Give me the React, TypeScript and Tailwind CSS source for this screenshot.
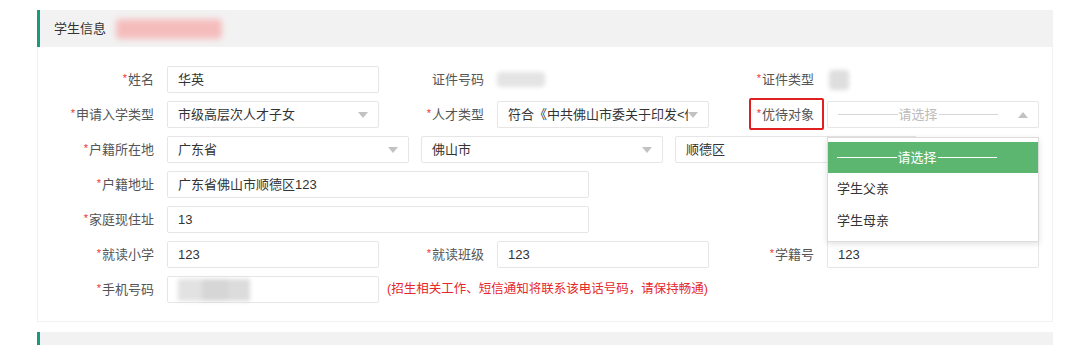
import React from "react";

const font = { fontFamily: '"Liberation Sans", "Noto Sans CJK SC", sans-serif' };

function Label({ text, star = true, children }: { text: string; star?: boolean; children?: React.ReactNode }) {
  return (
    <div className="w-[110px] shrink-0 pr-[5px] mr-[8px] text-right text-[13px] text-[#555]">
      <span className="relative inline-block">
        {star && <span className="text-[#e33] text-[11px] mr-[1px] align-top">*</span>}
        {text}
        {children}
      </span>
    </div>
  );
}

function Input({ value, w = "w-[212px]" }: { value?: React.ReactNode; w?: string }) {
  return (
    <div className={`${w} h-[27px] shrink-0 border border-[#e6e6e6] rounded-[2px] bg-white flex items-center px-[10px] text-[13px] text-[#333]`}>
      {value}
    </div>
  );
}

function Caret({ up = false }: { up?: boolean }) {
  return (
    <svg width="10" height="6" viewBox="0 0 10 6" className="shrink-0">
      {up ? <path d="M0 6 L5 0 L10 6 Z" fill="#c2c2c2" /> : <path d="M0 0 L10 0 L5 6 Z" fill="#c2c2c2" />}
    </svg>
  );
}

function Select({ value, w = "w-[212px]", up = false, muted = false }: { value: React.ReactNode; w?: string; up?: boolean; muted?: boolean }) {
  return (
    <div className={`${w} h-[27px] shrink-0 border border-[#e6e6e6] rounded-[2px] bg-white flex items-center pl-[10px] pr-[10px] text-[13px] ${muted ? "text-[#bbb]" : "text-[#333]"}`}>
      <span className="flex-1 overflow-hidden whitespace-nowrap">{value}</span>
      <Caret up={up} />
    </div>
  );
}

function Placeholder({ color }: { color: string }) {
  return (
    <span className="flex items-center w-[160px]">
      <span className={`flex-1 h-px ${color}`} />
      <span className="px-[1px]">请选择</span>
      <span className={`flex-1 h-px ${color}`} />
    </span>
  );
}

function Row({ children }: { children: React.ReactNode }) {
  return <div className="flex items-center h-[27px]">{children}</div>;
}

export default function App() {
  return (
    <div className="w-[1080px] h-[345px] bg-white overflow-hidden pt-[10px] pl-[37px]" style={font}>
      <div className="w-[1016px]">
        <div className="h-[37px] bg-[#f2f2f2] border-l-[3px] border-[#179a80] flex items-center pl-[14px]">
          <span className="text-[13px] text-[#333]">学生信息</span>
          <div className="ml-[10px] w-[106px] h-[20px] bg-[#f6b7b7] blur-[3px] rounded-sm opacity-90" />
        </div>

        <div className="h-[275px] border border-t-0 border-[#f1f1f1] pt-[19px] pl-[11px] flex flex-col gap-[8px]">
          <Row>
            <Label text="姓名" />
            <Input value="华英" />
            <Label text="证件号码" star={false} />
            <div className="w-[212px] shrink-0 flex items-center">
              <div className="w-[48px] h-[15px] bg-[#e4e4e4] blur-[2px] rounded" />
            </div>
            <Label text="证件类型" />
            <div className="w-[212px] shrink-0 flex items-center">
              <div className="ml-[2px] w-[20px] h-[20px] bg-[#dedede] blur-[2px] rounded" />
            </div>
          </Row>

          <Row>
            <Label text="申请入学类型" />
            <Select value="市级高层次人才子女" />
            <Label text="人才类型" />
            <Select value="符合《中共佛山市委关于印发<佛山市" />
            <Label text="优待对象">
              <span className="absolute left-[-8px] right-[-10px] top-[-7px] bottom-[-6px] border-2 border-[#e02020] rounded-[2px]" />
            </Label>
            <div className="relative">
              <Select value={<Placeholder color="bg-[#d6d6d6]" />} up muted />
              <div className="absolute left-0 top-[36px] z-10 w-[212px] bg-white border border-[#dcdcdc] shadow-[0_2px_6px_rgba(0,0,0,0.12)] pt-[4px] pb-[4px] text-[13px] text-[#333]">
                <div className="h-[31px] bg-[#5db670] text-white flex items-center pl-[9px]">
                  <Placeholder color="bg-white" />
                </div>
                <div className="h-[32px] flex items-center pl-[9px]">学生父亲</div>
                <div className="h-[32px] flex items-center pl-[9px]">学生母亲</div>
              </div>
            </div>
          </Row>

          <Row>
            <Label text="户籍所在地" />
            <div className="flex gap-[12px]">
              <Select value="广东省" w="w-[242px]" />
              <Select value="佛山市" w="w-[242px]" />
              <Select value="顺德区" w="w-[242px]" />
            </div>
          </Row>

          <Row>
            <Label text="户籍地址" />
            <Input value="广东省佛山市顺德区123" w="w-[422px]" />
          </Row>

          <Row>
            <Label text="家庭现住址" />
            <Input value="13" w="w-[422px]" />
          </Row>

          <Row>
            <Label text="就读小学" />
            <Input value="123" />
            <Label text="就读班级" />
            <Input value="123" />
            <Label text="学籍号" />
            <Input value="123" />
          </Row>

          <Row>
            <Label text="手机号码" />
            <Input
              value={
                <div className="flex blur-[2px]">
                  <div className="w-[24px] h-[22px] bg-[#e2e2e2]" />
                  <div className="w-[26px] h-[22px] bg-[#d6d6d6]" />
                  <div className="w-[22px] h-[22px] bg-[#dcdcdc]" />
                </div>
              }
            />
            <span className="ml-[8px] text-[12.5px] text-[#e5282b] whitespace-nowrap">(招生相关工作、短信通知将联系该电话号码，请保持畅通)</span>
          </Row>
        </div>

        <div className="mt-[10px] h-[30px] bg-[#f2f2f2] border-l-[3px] border-[#179a80]" />
      </div>
    </div>
  );
}
